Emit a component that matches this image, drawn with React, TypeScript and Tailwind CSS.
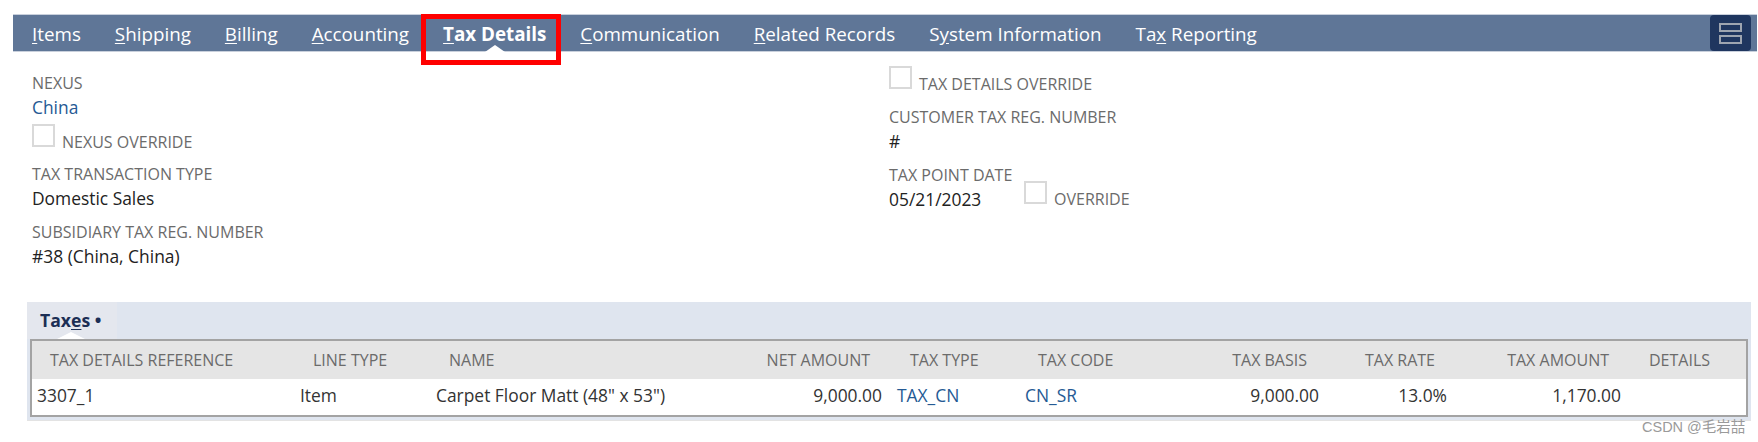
const tabs = [
  { pre: "", key: "I", post: "tems" },
  { pre: "", key: "S", post: "hipping" },
  { pre: "", key: "B", post: "illing" },
  { pre: "", key: "A", post: "ccounting" },
  { pre: "", key: "T", post: "ax Details", active: true },
  { pre: "", key: "C", post: "ommunication" },
  { pre: "", key: "R", post: "elated Records" },
  { pre: "S", key: "y", post: "stem Information" },
  { pre: "Ta", key: "x", post: " Reporting" },
];

function TabBar() {
  return (
    <div className="relative ml-[13px] mr-[1px] flex h-[38px] items-center border-y border-[#c9d0dc] bg-[#5f7697] pl-[19px] pr-[6px] text-[18.8px] text-white">
      <div className="flex flex-1 gap-[34px] pt-[2px]">
        {tabs.map((t) => (
          <span key={t.key + t.post} className={t.active ? "relative font-bold" : ""}>
            {t.pre}
            <span className="underline underline-offset-2">{t.key}</span>
            {t.post}
            {t.active && (
              <span className="absolute bottom-[-4px] left-1/2 h-0 w-0 -translate-x-1/2 border-x-[10px] border-b-[7px] border-x-transparent border-b-white" />
            )}
          </span>
        ))}
      </div>
      <div className="flex h-[36px] w-[41px] flex-col items-center justify-center gap-[3px] rounded-[4px] bg-[#1f365f]">
        <span className="h-[9px] w-[23px] border-2 border-[#9ea5b0]" />
        <span className="h-[9px] w-[23px] border-2 border-[#9ea5b0]" />
      </div>
    </div>
  );
}

function Label({ children }: { children: string }) {
  return <div className="text-[16px] leading-[25px] text-[#6b6b6b]">{children}</div>;
}

function Value({ children, link }: { children: string; link?: boolean }) {
  return (
    <div className={"text-[17.4px] leading-[23px] " + (link ? "text-[#255a94]" : "text-[#222222]")}>
      {children}
    </div>
  );
}

function Check({ label, className }: { label: string; className?: string }) {
  return (
    <div className={"flex items-end gap-[7px] " + (className ?? "")}>
      <span className="h-[23px] w-[23px] border-2 border-[#d9d9d9] bg-white" />
      <span className="relative top-[5px] text-[16px] leading-[20px] text-[#6b6b6b]">{label}</span>
    </div>
  );
}

function Fields() {
  return (
    <div className="flex pl-[32px] pt-[14px]">
      <div className="w-[857px] pt-[5px]">
        <Label>NEXUS</Label>
        <Value link>China</Value>
        <Check label="NEXUS OVERRIDE" className="mt-[5px]" />
        <div className="mt-[15px]">
          <Label>TAX TRANSACTION TYPE</Label>
          <Value>Domestic Sales</Value>
        </div>
        <div className="mt-[10px]">
          <Label>SUBSIDIARY TAX REG. NUMBER</Label>
          <Value>#38 (China, China)</Value>
        </div>
      </div>
      <div>
        <Check label="TAX DETAILS OVERRIDE" />
        <div className="mt-[16px]">
          <Label>CUSTOMER TAX REG. NUMBER</Label>
          <Value>#</Value>
        </div>
        <div className="mt-[10px]">
          <Label>TAX POINT DATE</Label>
          <div className="flex">
            <div className="w-[135px]">
              <Value>05/21/2023</Value>
            </div>
            <Check label="OVERRIDE" className="-mt-[7px] self-start" />
          </div>
        </div>
      </div>
    </div>
  );
}

const columns = [
  { title: "TAX DETAILS REFERENCE", value: "3307_1", width: "w-[263px]" },
  { title: "LINE TYPE", value: "Item", width: "w-[136px]" },
  { title: "NAME", value: 'Carpet Floor Matt (48" x 53")', width: "w-[271px]" },
  { title: "NET AMOUNT", value: "9,000.00", width: "w-[190px]", right: true },
  { title: "TAX TYPE", value: "TAX_CN", width: "w-[128px]", link: true },
  { title: "TAX CODE", value: "CN_SR", width: "w-[152px]", link: true },
  { title: "TAX BASIS", value: "9,000.00", width: "w-[157px]", right: true },
  { title: "TAX RATE", value: "13.0%", width: "w-[128px]", right: true },
  { title: "TAX AMOUNT", value: "1,170.00", width: "w-[174px]", right: true },
  { title: "DETAILS", value: "", width: "w-[115px]" },
];

function TaxesPanel() {
  return (
    <div className="ml-[27px] mr-[7px] mt-[34px] border-b border-[#e3e3e3] bg-[#dfe5ef] px-[3px] pb-[3px]">
      <div className="relative -ml-[3px] flex h-[37px] w-[90px] items-center bg-[#e4e7ee] pl-[13px] text-[17.6px] font-bold text-[#1c2f55]">
        <span>
          Tax<span className="underline underline-offset-2">e</span>s •
        </span>
        <span className="absolute bottom-0 left-[30px] h-0 w-0 border-x-[14px] border-b-[7px] border-x-transparent border-b-white" />
      </div>
      <div className="border-2 border-[#a3a3a3] bg-white">
        <table className="w-full table-fixed border-collapse">
          <thead>
            <tr className="h-[38px] bg-[#e5e5e5]">
              {columns.map((c) => (
                <th
                  key={c.title}
                  className={
                    c.width +
                    " text-[16px] font-normal text-[#6b6b6b] " +
                    (c.right ? "pr-[22px] text-right" : "pl-[18px] text-left")
                  }
                >
                  {c.title}
                </th>
              ))}
            </tr>
          </thead>
          <tbody>
            <tr className="h-[36px]">
              {columns.map((c) => (
                <td
                  key={c.title}
                  className={
                    "pb-[3px] text-[17.4px] " +
                    (c.right ? "pr-[10px] text-right " : "pl-[5px] ") +
                    (c.link ? "text-[#255a94]" : "text-[#333333]")
                  }
                >
                  {c.value}
                </td>
              ))}
            </tr>
          </tbody>
        </table>
      </div>
    </div>
  );
}

export default function App() {
  return (
    <div className="relative h-[442px] w-[1758px] overflow-hidden bg-white pt-[14px] font-['Open_Sans',sans-serif]">
      <TabBar />
      <Fields />
      <TaxesPanel />
      {/* red highlight from the annotated screenshot */}
      <div className="absolute left-[421px] top-[14px] h-[51px] w-[140px] border-[5px] border-[#ff0000]" />
      <div className="absolute left-[1642px] top-[417px] font-['Liberation_Sans','Noto_Sans_CJK_SC',sans-serif] text-[14.5px] text-[#9a9a9a]">
        CSDN @毛岩喆
      </div>
    </div>
  );
}
